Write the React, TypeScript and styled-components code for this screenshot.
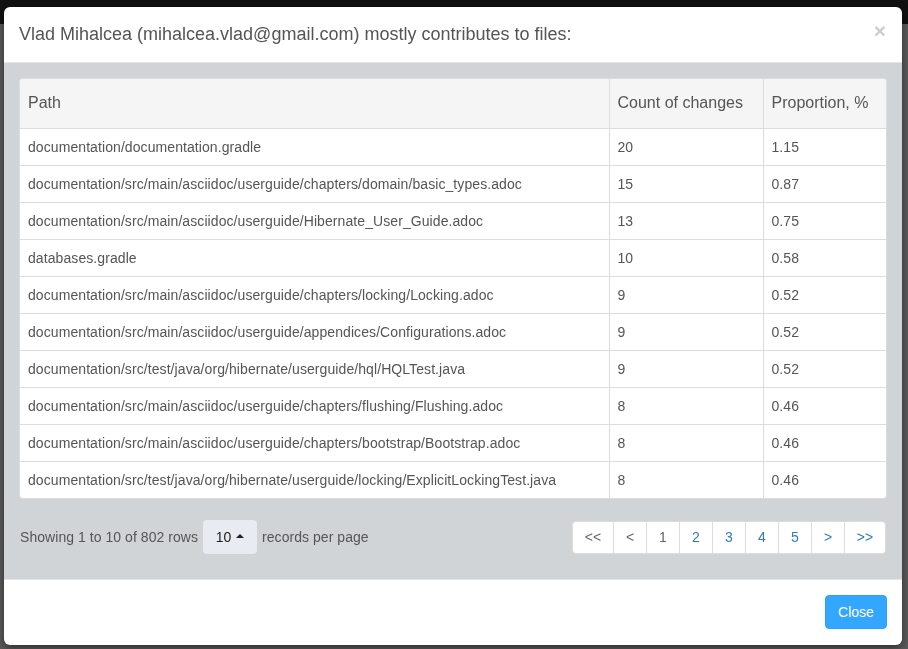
import React from "react";
import styled, { createGlobalStyle } from "styled-components";

const Global = createGlobalStyle`
  html, body { margin: 0; padding: 0; }
  body {
    width: 908px;
    height: 649px;
    overflow: hidden;
    background: #5b5b5b;
    font-family: "Liberation Sans", Arial, sans-serif;
    color: #555;
  }
  * { box-sizing: border-box; }
`;

const Page = styled.div`
  width: 908px;
  height: 649px;
  display: flex;
  flex-direction: column;
`;

const NavBar = styled.div`
  height: 24px;
  background: #111;
`;

const PageBody = styled.div`
  flex: 1;
  background: #5b5b5b;
`;

const Modal = styled.div`
  position: fixed;
  left: 4px;
  top: 7px;
  width: 898px;
  height: 638px;
  background: #fff;
  border-radius: 6px;
  box-shadow: 0 3px 9px rgba(0, 0, 0, 0.5);
  display: flex;
  flex-direction: column;
  overflow: hidden;
`;

const Header = styled.div`
  display: flex;
  align-items: center;
  justify-content: space-between;
  padding: 15px;
  border-bottom: 1px solid #e5e5e5;
  height: 56px;
`;

const Title = styled.h4`
  margin: 0;
  font-size: 18px;
  font-weight: 400;
  line-height: 1.42857;
  color: #555;
`;

const CloseX = styled.span`
  font-size: 21px;
  font-weight: 700;
  line-height: 1;
  color: #000;
  opacity: 0.2;
  margin-top: -8px;
  margin-right: 1px;
`;

const Body = styled.div`
  flex: 1;
  background: #d1d4d7;
  padding: 15px;
  display: flex;
  flex-direction: column;
`;

const TableWrap = styled.div`
  border: 1px solid #ddd;
  border-radius: 4px;
  background: #fff;
  overflow: hidden;
`;

const Table = styled.table`
  width: 100%;
  border-collapse: collapse;
  table-layout: fixed;
`;

const Th = styled.th<{ $w?: number }>`
  ${(p) => (p.$w ? `width: ${p.$w}px;` : "")}
  height: 49px;
  text-align: left;
  font-weight: 400;
  font-size: 16px;
  color: #555;
  padding: 0 8px;
  background: #f5f5f5;
  border-bottom: 1px solid #ddd;
  border-left: 1px solid #ddd;
  &:first-child { border-left: none; }
`;

const Td = styled.td`
  height: 37px;
  padding: 0 8px;
  font-size: 14px;
  line-height: 20px;
  letter-spacing: 0.08px;
  color: #555;
  border-top: 1px solid #ddd;
  border-left: 1px solid #ddd;
  white-space: nowrap;
  &:first-child { border-left: none; }
`;

const Tr = styled.tr`
  &:first-child td { border-top: none; }
`;

const Footer = styled.div`
  display: flex;
  align-items: center;
  justify-content: space-between;
  margin-top: 21px;
  padding-left: 1px;
  padding-right: 1px;
`;

const Detail = styled.div`
  display: flex;
  align-items: center;
  gap: 5px;
  font-size: 14px;
  letter-spacing: 0.05px;
  color: #555;
`;

const SizeButton = styled.div`
  display: inline-flex;
  align-items: center;
  justify-content: center;
  gap: 5px;
  width: 54px;
  height: 34px;
  background: #e8ebf1;
  border-radius: 4px;
  color: #222;
  font-size: 14px;
`;

const Caret = styled.span`
  width: 0;
  height: 0;
  border-left: 4px solid transparent;
  border-right: 4px solid transparent;
  border-bottom: 4px solid #222;
  margin-top: -2px;
`;

const Pager = styled.ul`
  display: flex;
  list-style: none;
  margin: 0;
  padding: 0;
  border-radius: 4px;
  overflow: hidden;
  background: #fff;
  border: 1px solid #ddd;
`;

const PageItem = styled.li<{ $wide?: boolean; $muted?: boolean }>`
  width: ${(p) => (p.$wide ? 41 : 33)}px;
  height: 31px;
  display: flex;
  align-items: center;
  justify-content: center;
  font-size: 14px;
  color: ${(p) => (p.$muted ? "#666" : "#337ab7")};
  border-left: 1px solid #ddd;
  &:first-child { border-left: none; width: 40px; }
`;

const ModalFooter = styled.div`
  height: 66px;
  border-top: 1px solid #e5e5e5;
  padding: 15px;
  display: flex;
  justify-content: flex-end;
  align-items: flex-start;
`;

const CloseButton = styled.button`
  width: 62px;
  height: 34px;
  background: #33a6ff;
  border: 1px solid #2e9ff5;
  border-radius: 4px;
  color: #fff;
  font-family: "Liberation Sans", Arial, sans-serif;
  font-size: 14px;
  padding: 0;
`;

const rows: [string, string, string][] = [
  ["documentation/documentation.gradle", "20", "1.15"],
  ["documentation/src/main/asciidoc/userguide/chapters/domain/basic_types.adoc", "15", "0.87"],
  ["documentation/src/main/asciidoc/userguide/Hibernate_User_Guide.adoc", "13", "0.75"],
  ["databases.gradle", "10", "0.58"],
  ["documentation/src/main/asciidoc/userguide/chapters/locking/Locking.adoc", "9", "0.52"],
  ["documentation/src/main/asciidoc/userguide/appendices/Configurations.adoc", "9", "0.52"],
  ["documentation/src/test/java/org/hibernate/userguide/hql/HQLTest.java", "9", "0.52"],
  ["documentation/src/main/asciidoc/userguide/chapters/flushing/Flushing.adoc", "8", "0.46"],
  ["documentation/src/main/asciidoc/userguide/chapters/bootstrap/Bootstrap.adoc", "8", "0.46"],
  ["documentation/src/test/java/org/hibernate/userguide/locking/ExplicitLockingTest.java", "8", "0.46"],
];

const pages: { label: string; wide?: boolean; muted?: boolean }[] = [
  { label: "<<", wide: true, muted: true },
  { label: "<", muted: true },
  { label: "1", muted: true },
  { label: "2" },
  { label: "3" },
  { label: "4" },
  { label: "5" },
  { label: ">" },
  { label: ">>", wide: true },
];

export default function App() {
  return (
    <>
      <Global />
      <Page>
        <NavBar />
        <PageBody />
      </Page>
      <Modal>
        <Header>
          <Title>Vlad Mihalcea (mihalcea.vlad@gmail.com) mostly contributes to files:</Title>
          <CloseX>×</CloseX>
        </Header>
        <Body>
          <TableWrap>
            <Table>
              <thead>
                <tr>
                  <Th>Path</Th>
                  <Th $w={154}>Count of changes</Th>
                  <Th $w={123}>Proportion, %</Th>
                </tr>
              </thead>
              <tbody>
                {rows.map((r) => (
                  <Tr key={r[0]}>
                    <Td>{r[0]}</Td>
                    <Td>{r[1]}</Td>
                    <Td>{r[2]}</Td>
                  </Tr>
                ))}
              </tbody>
            </Table>
          </TableWrap>
          <Footer>
            <Detail>
              <span>Showing 1 to 10 of 802 rows</span>
              <SizeButton>
                10 <Caret />
              </SizeButton>
              <span>records per page</span>
            </Detail>
            <Pager>
              {pages.map((p) => (
                <PageItem key={p.label} $wide={p.wide} $muted={p.muted}>
                  {p.label}
                </PageItem>
              ))}
            </Pager>
          </Footer>
        </Body>
        <ModalFooter>
          <CloseButton>Close</CloseButton>
        </ModalFooter>
      </Modal>
    </>
  );
}
